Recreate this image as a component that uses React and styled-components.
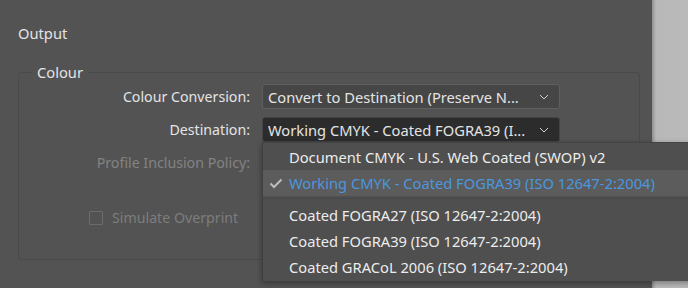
import styled, { createGlobalStyle } from 'styled-components'

const GlobalStyle = createGlobalStyle`
  html, body {
    margin: 0;
    padding: 0;
    background: #535353;
    overflow: hidden;
  }
  * { box-sizing: border-box; }
`

const font = `"Noto Sans", "Open Sans", sans-serif`

const Page = styled.div`
  display: flex;
  width: 688px;
  height: 288px;
  overflow: hidden;
  font-family: ${font};
  font-size: 14.7px;
  color: #e4e4e4;
`

const Panel = styled.div`
  width: 652px;
  padding: 22px 12px 0 18px;
  display: flex;
  flex-direction: column;
`

const SideStrip = styled.div`
  flex: 1;
  background: linear-gradient(90deg, #8f8f8f 0, #b8b8b8 4px, #bababa 100%);
`

const Heading = styled.div`
  height: 22px;
  line-height: 22px;
`

const Group = styled.fieldset`
  margin: 20px 0 0;
  padding: 4px 0 32px;
  border: 1px solid #4a4a4a;
  border-radius: 3px;
  min-width: 0;
`

const Legend = styled.legend`
  margin-left: 12px;
  padding: 0 6px;
  line-height: 16px;
`

const Form = styled.div`
  display: grid;
  grid-template-columns: 231px 298px;
  column-gap: 12px;
  row-gap: 8px;
  align-items: center;
`

const Label = styled.div`
  text-align: right;
  white-space: nowrap;
  font-size: 14.2px;
  color: ${p => (p.disabled ? '#838383' : '#e4e4e4')};
`

const SelectWrap = styled.div`
  position: relative;
`

const Select = styled.div`
  display: flex;
  align-items: center;
  height: 25px;
  padding: 0 10px 0 5px;
  border: 1px solid ${p => (p.open ? '#444' : '#5f5f5f')};
  border-radius: 3px;
  background: ${p => (p.open ? '#2c2c2c' : '#464646')};
  color: ${p => (p.disabled ? '#838383' : '#e4e4e4')};
  white-space: nowrap;
`

const SelectText = styled.span`
  flex: 1;
  overflow: hidden;
`

const Chevron = () => (
  <svg width="10" height="6" viewBox="0 0 10 6" fill="none">
    <path d="M1 1l4 4 4-4" stroke="#cfcfcf" strokeWidth="1" />
  </svg>
)

const CheckRow = styled.div`
  grid-column: 1 / span 2;
  display: flex;
  align-items: center;
  gap: 9px;
  padding-left: 70px;
  margin-top: 25px;
  font-size: 14.2px;
  color: #7d7d7d;
`

const Box = styled.span`
  width: 14px;
  height: 14px;
  border: 1px solid #6c6c6c;
  border-radius: 1px;
`

const NextHeading = styled.div`
  margin: 26px 0 0 18px;
  line-height: 16px;
`

const Menu = styled.div`
  position: absolute;
  top: 25px;
  left: 0;
  width: 440px;
  padding: 1px 0;
  background: #4f4f4f;
  border-left: 1px solid #3f3f3f;
  border-top: 1px solid #444;
  box-shadow: 0 2px 6px rgba(0, 0, 0, 0.35);
  z-index: 2;
`

const Item = styled.div`
  display: flex;
  align-items: center;
  height: 26px;
  padding-left: 26px;
  position: relative;
  white-space: nowrap;
  background: ${p => (p.selected ? '#5c5c5c' : 'transparent')};
  color: ${p => (p.selected ? '#4b97df' : '#ececec')};
`

const Check = styled.svg`
  position: absolute;
  left: 6px;
  top: 8px;
`

const Separator = styled.div`
  height: 1px;
  margin: 2px 0 3px;
  background: #474747;
`

const profiles = [
  'Coated FOGRA27 (ISO 12647-2:2004)',
  'Coated FOGRA39 (ISO 12647-2:2004)',
  'Coated GRACoL 2006 (ISO 12647-2:2004)',
]

export default function App() {
  return (
    <>
      <GlobalStyle />
      <Page>
        <Panel>
          <Heading>Output</Heading>
          <Group>
            <Legend>Colour</Legend>
            <Form>
              <Label>Colour Conversion:</Label>
              <Select>
                <SelectText>Convert to Destination (Preserve N...</SelectText>
                <Chevron />
              </Select>
              <Label>Destination:</Label>
              <SelectWrap>
                <Select open>
                  <SelectText>Working CMYK - Coated FOGRA39 (I...</SelectText>
                  <Chevron />
                </Select>
                <Menu>
                  <Item>Document CMYK - U.S. Web Coated (SWOP) v2</Item>
                  <Item selected>
                    <Check width="14" height="11" viewBox="0 0 14 11" fill="none">
                      <path d="M1.5 5.5l3.5 3.5 7.5-7.5" stroke="#bdbdbd" strokeWidth="2" />
                    </Check>
                    Working CMYK - Coated FOGRA39 (ISO 12647-2:2004)
                  </Item>
                  <Separator />
                  {profiles.map(p => (
                    <Item key={p}>{p}</Item>
                  ))}
                </Menu>
              </SelectWrap>
              <Label disabled>Profile Inclusion Policy:</Label>
              {/* covered by the open menu */}
              <Select disabled>
                <SelectText />
                <Chevron />
              </Select>
              <CheckRow>
                <Box />
                Simulate Overprint
              </CheckRow>
            </Form>
          </Group>
          <NextHeading>PDF/X</NextHeading>
        </Panel>
        <SideStrip />
      </Page>
    </>
  )
}
